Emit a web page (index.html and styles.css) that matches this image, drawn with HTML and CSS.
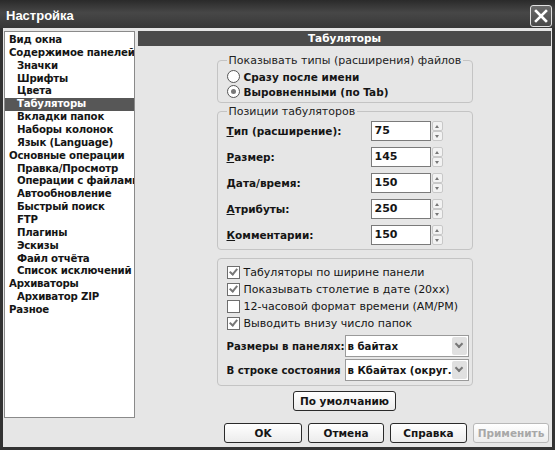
FILE: index.html
```html
<!DOCTYPE html>
<html lang="ru">
<head>
    <meta charset="UTF-8">
    <title>Настройка</title>
    <link rel="stylesheet" href="styles.css">
</head>
<body>
    <div class="window">
        <div class="titlebar">
            <span class="title">Настройка</span>
            <span class="close">
                <svg width="14" height="14" viewBox="0 0 14 14"><path d="M2 2 L12 12 M12 2 L2 12" stroke="#fff" stroke-width="2.6" stroke-linecap="square"/></svg>
            </span>
        </div>

        <div class="client">
            <div class="main">
                <ul class="tree">
                    <li>Вид окна</li>
                    <li>Содержимое панелей</li>
                    <li class="sub">Значки</li>
                    <li class="sub">Шрифты</li>
                    <li class="sub">Цвета</li>
                    <li class="sub selected">Табуляторы</li>
                    <li class="sub">Вкладки папок</li>
                    <li class="sub">Наборы колонок</li>
                    <li class="sub">Язык (Language)</li>
                    <li>Основные операции</li>
                    <li class="sub">Правка/Просмотр</li>
                    <li class="sub">Операции с файлами</li>
                    <li class="sub">Автообновление</li>
                    <li class="sub">Быстрый поиск</li>
                    <li class="sub">FTP</li>
                    <li class="sub">Плагины</li>
                    <li class="sub">Эскизы</li>
                    <li class="sub">Файл отчёта</li>
                    <li class="sub">Список исключений</li>
                    <li>Архиваторы</li>
                    <li class="sub">Архиватор ZIP</li>
                    <li>Разное</li>
                </ul>

                <div class="panel">
                    <div class="panel-head">Табуляторы</div>
                    <div class="panel-body">
                        <fieldset class="group group-types">
                            <legend>Показывать типы (расширения) файлов</legend>
                            <div class="radio-row"><span class="radio"></span>Сразу после имени</div>
                            <div class="radio-row"><span class="radio checked"></span>Выровненными (по Tab)</div>
                        </fieldset>

                        <fieldset class="group group-tabs">
                            <legend>Позиции табуляторов</legend>
                            <div class="num-row">
                                <span class="num-label"><u>Т</u>ип (расширение):</span>
                                <span class="num-input">75</span>
                                <span class="spin"><span class="spin-up"></span><span class="spin-down"></span></span>
                            </div>
                            <div class="num-row">
                                <span class="num-label"><u>Р</u>азмер:</span>
                                <span class="num-input">145</span>
                                <span class="spin"><span class="spin-up"></span><span class="spin-down"></span></span>
                            </div>
                            <div class="num-row">
                                <span class="num-label"><u>Д</u>ата/время:</span>
                                <span class="num-input">150</span>
                                <span class="spin"><span class="spin-up"></span><span class="spin-down"></span></span>
                            </div>
                            <div class="num-row">
                                <span class="num-label"><u>А</u>трибуты:</span>
                                <span class="num-input">250</span>
                                <span class="spin"><span class="spin-up"></span><span class="spin-down"></span></span>
                            </div>
                            <div class="num-row">
                                <span class="num-label"><u>К</u>омментарии:</span>
                                <span class="num-input">150</span>
                                <span class="spin"><span class="spin-up"></span><span class="spin-down"></span></span>
                            </div>
                        </fieldset>

                        <div class="group group-misc">
                            <div class="check-row"><span class="check checked"></span>Табуляторы по ширине панели</div>
                            <div class="check-row"><span class="check checked"></span>Показывать столетие в дате (20xx)</div>
                            <div class="check-row"><span class="check"></span>12-часовой формат времени (AM/PM)</div>
                            <div class="check-row"><span class="check checked"></span>Выводить внизу число папок</div>
                            <div class="select-row">
                                <span class="select-label">Размеры в панелях:</span>
                                <span class="select"><span class="select-value">в байтах</span><span class="select-arrow"></span></span>
                            </div>
                            <div class="select-row">
                                <span class="select-label">В строке состояния</span>
                                <span class="select"><span class="select-value">в Кбайтах (округ.</span><span class="select-arrow"></span></span>
                            </div>
                        </div>

                        <button class="btn btn-default">По умолчанию</button>
                    </div>
                </div>
            </div>

            <div class="footer">
                <button class="btn btn-ok">OK</button>
                <button class="btn btn-cancel">Отмена</button>
                <button class="btn btn-help">Справка</button>
                <button class="btn btn-apply" disabled>Применить</button>
            </div>
        </div>
    </div>
</body>
</html>
```

FILE: styles.css
```css
body {
    margin: 0;
    font-family: "DejaVu Sans", sans-serif;
    font-size: 11px;
    color: #151515;
}

.window {
    width: 555px;
    height: 450px;
    background-color: #333;
    display: flex;
    flex-direction: column;
    box-sizing: border-box;
}

.titlebar {
    height: 28px;
    flex-shrink: 0;
    display: flex;
    align-items: center;
    justify-content: space-between;
    padding: 0 3px 0 6px;
    background: linear-gradient(#2a2a2a, #474747 45%, #383838);
}

.title {
    color: #fff;
    font-family: "Liberation Sans", Arial, sans-serif;
    font-weight: bold;
    font-size: 13px;
    margin-top: 3px;
}

.close {
    width: 20px;
    height: 20px;
    margin-top: 4px;
    border: 1px solid #e0e0e0;
    border-radius: 3px;
    background: linear-gradient(#6a6a6a, #4a4a4a);
    display: flex;
    align-items: center;
    justify-content: center;
}

.client {
    flex: 1;
    margin: 0 3px 3px;
    background-color: #e6e6e6;
    padding-top: 3px;
    display: flex;
    flex-direction: column;
}

.main {
    display: flex;
    height: 387px;
}

/* left tree */
.tree {
    list-style: none;
    margin: 0 0 0 1px;
    padding: 2px 0 0;
    width: 131px;
    box-sizing: border-box;
    background-color: #fff;
    border: 1px solid #8a8a8a;
    overflow: hidden;
    font-weight: bold;
    font-size: 10.2px;
    letter-spacing: -0.2px;
}

.tree li {
    height: 12.86px;
    line-height: 12.86px;
    padding-left: 4px;
    white-space: nowrap;
}

.tree li.sub {
    padding-left: 12px;
}

.tree li.selected {
    background-color: #575757;
    color: #fff;
}

/* right panel */
.panel {
    flex: 1;
    margin: 0 1px 0 3px;
    display: flex;
    flex-direction: column;
}

.panel-head {
    height: 15px;
    line-height: 15px;
    background-color: #4b4b4b;
    color: #fff;
    font-weight: bold;
    font-size: 10.5px;
    text-align: center;
}

.panel-body {
    display: flex;
    flex-direction: column;
    align-items: center;
}

.group {
    width: 256px;
    box-sizing: border-box;
    margin: 0;
    border: 1px solid #c4c4c4;
    border-radius: 4px;
    padding: 0 0 0 9px;
    min-inline-size: 0;
}

.group legend {
    padding: 0 2px;
    margin-left: 0;
    line-height: 13px;
    color: #222;
}

.group-types {
    margin-top: 8px;
    padding-bottom: 3px;
}

.radio-row {
    display: flex;
    align-items: center;
    height: 15px;
    font-weight: bold;
    font-size: 10.5px;
}

.radio-row:first-of-type {
    margin-top: 2px;
}

.radio {
    width: 11px;
    height: 11px;
    border: 1px solid #555;
    border-radius: 50%;
    background-color: #fff;
    margin-right: 4px;
    position: relative;
    flex-shrink: 0;
}

.radio.checked::after {
    content: "";
    position: absolute;
    left: 3px;
    top: 3px;
    width: 5px;
    height: 5px;
    border-radius: 50%;
    background-color: #777;
}

.group-tabs {
    margin-top: 2px;
    padding-bottom: 1px;
}

.num-row {
    display: flex;
    align-items: center;
    height: 26px;
    font-weight: bold;
    font-size: 10.5px;
}

.num-label {
    width: 144px;
    flex-shrink: 0;
}

.num-input {
    width: 60px;
    height: 20px;
    box-sizing: border-box;
    border: 1px solid #7a7a7a;
    background-color: #fff;
    line-height: 18px;
    padding-left: 3px;
    font-size: 11px;
}

.spin {
    display: flex;
    flex-direction: column;
    margin-left: 1px;
    height: 20px;
    width: 11px;
}

.spin-up,
.spin-down {
    flex: 1;
    border: 1px solid #c8c8c8;
    border-radius: 2px;
    background-color: #f2f2f2;
    position: relative;
}

.spin-up::after,
.spin-down::after {
    content: "";
    position: absolute;
    left: 2px;
    top: 3px;
    border-left: 2.5px solid transparent;
    border-right: 2.5px solid transparent;
}

.spin-up::after {
    border-bottom: 3px solid #777;
}

.spin-down::after {
    border-top: 3px solid #777;
}

.group-misc {
    margin-top: 8px;
    padding-top: 5px;
    padding-bottom: 3px;
}

.check-row {
    display: flex;
    align-items: center;
    height: 17px;
}

.check {
    width: 11px;
    height: 11px;
    border: 1px solid #6e6e6e;
    background-color: #fff;
    margin-right: 4px;
    position: relative;
    flex-shrink: 0;
}

.check.checked::after {
    content: "";
    position: absolute;
    left: 3px;
    top: 0;
    width: 3px;
    height: 6px;
    border-right: 2px solid #777;
    border-bottom: 2px solid #777;
    transform: rotate(40deg);
}

.select-row {
    display: flex;
    align-items: center;
    height: 24px;
    font-weight: bold;
    font-size: 10.2px;
}

.check-row + .select-row {
    margin-top: 2px;
}

.select-label {
    width: 118px;
    flex-shrink: 0;
    white-space: nowrap;
    overflow: hidden;
}

.select {
    width: 124px;
    height: 22px;
    box-sizing: border-box;
    border: 1px solid #9a9a9a;
    background-color: #fff;
    display: flex;
    align-items: center;
}

.select-value {
    flex: 1;
    padding-left: 2px;
    white-space: nowrap;
    overflow: hidden;
}

.select-arrow {
    width: 15px;
    height: 18px;
    margin-right: 1px;
    background-color: #e0e0e0;
    border-radius: 2px;
    position: relative;
    flex-shrink: 0;
}

.select-arrow::after {
    content: "";
    position: absolute;
    left: 4px;
    top: 4px;
    width: 4px;
    height: 4px;
    border-right: 2px solid #777;
    border-bottom: 2px solid #777;
    transform: rotate(45deg);
}

/* buttons */
.btn {
    font-family: "DejaVu Sans", sans-serif;
    font-size: 10.5px;
    font-weight: bold;
    color: #151515;
    height: 20px;
    padding: 0;
    border: 1px solid #2a2a2a;
    border-radius: 3px;
    background: linear-gradient(#ffffff, #ececec);
    cursor: pointer;
}

.btn-default {
    width: 103px;
    margin-top: 5px;
}

.footer {
    display: flex;
    justify-content: flex-end;
    gap: 6px;
    padding: 5px 3px 0 0;
}

.btn-ok {
    width: 78px;
}

.btn-cancel {
    width: 76px;
}

.btn-help {
    width: 77px;
}

.btn-apply {
    width: 76px;
    color: #a8a8a8;
    border-color: #b8b8b8;
    cursor: default;
}
```
